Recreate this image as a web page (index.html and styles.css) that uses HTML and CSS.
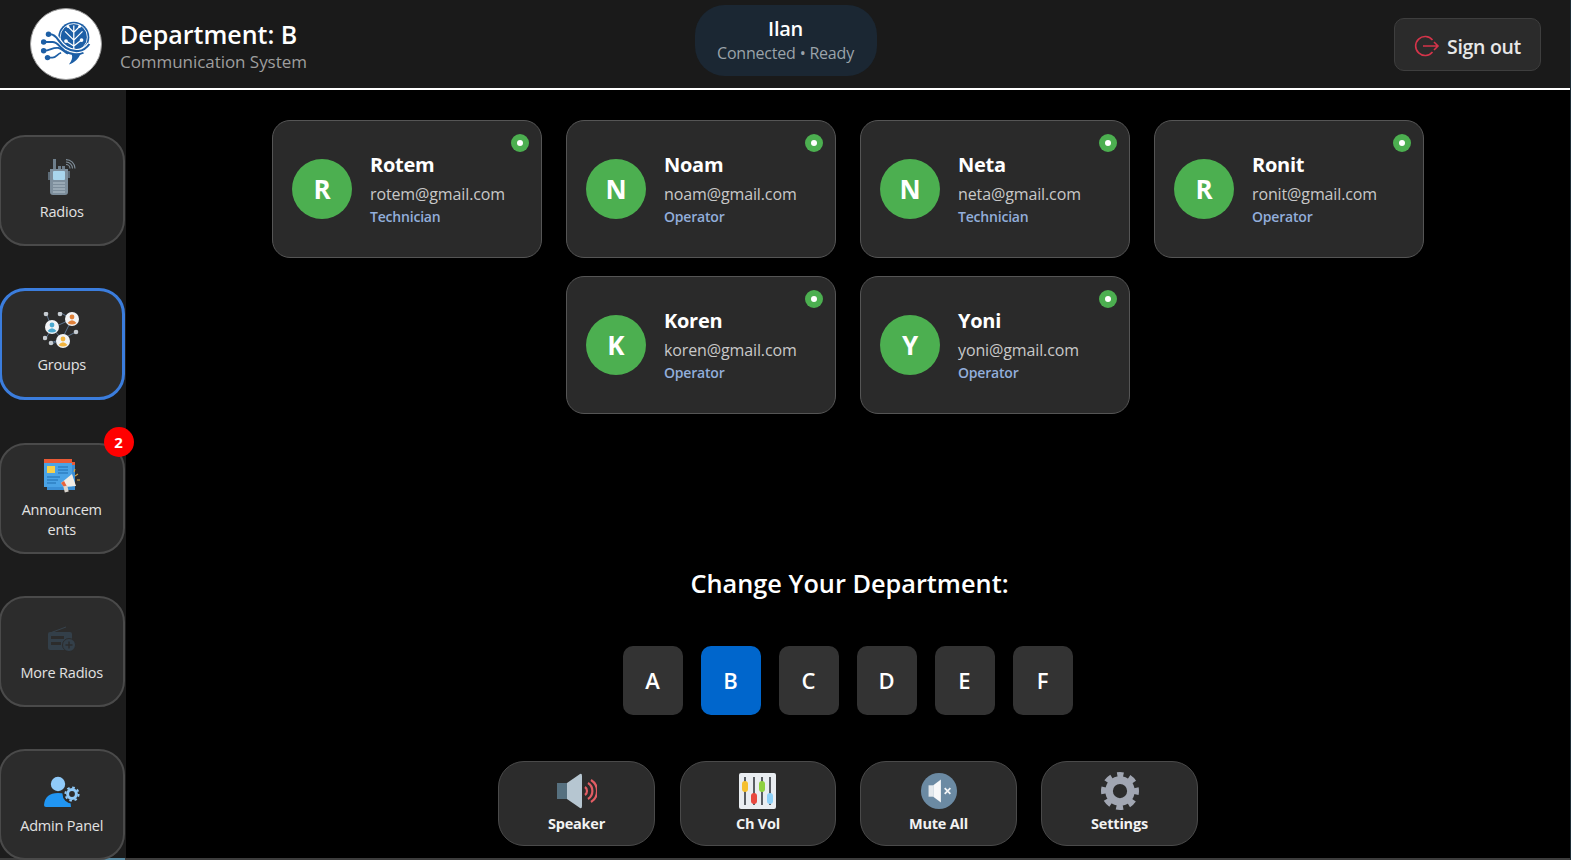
FILE: index.html
```html
<!DOCTYPE html>
<html lang="en">
<head>
<meta charset="utf-8">
<title>Department: B</title>
<link rel="stylesheet" href="styles.css">
</head>
<body>
<div class="app">
  <header class="topbar">
    <div class="brand">
      <div class="logo">
        <svg viewBox="0 0 72 72" width="70" height="70">
          <circle cx="44" cy="29" r="16" fill="#1d5fa6"/>
          <circle cx="44" cy="29" r="14" fill="none" stroke="#fff" stroke-width=".9"/>
          <path d="M44 43 V17 M44 32 L35 23 M44 32 L53 23 M44 38 L36 33 M44 38 L52 32 M38 18 L44 24 M50 18 L44 24" stroke="#fff" stroke-width="1.3" fill="none"/>
          <circle cx="36" cy="33" r="1.9" fill="#fff"/><circle cx="52" cy="32" r="1.9" fill="#fff"/><circle cx="38" cy="18" r="1.5" fill="#fff"/><circle cx="50" cy="18" r="1.5" fill="#fff"/>
          <path d="M18 26 H20 C27 26 28 35 36 40 C44 45 54 45 60 36" stroke="#fff" stroke-width="4.6" fill="none"/>
          <path d="M18 26 H20 C27 26 28 35 36 40 C44 45 54 45 60 36" stroke="#1d5fa6" stroke-width="2.2" fill="none"/>
          <path d="M13 34 H22 C29 34 30 42 38 45 C44 47 50 47 54 45" stroke="#1d5fa6" stroke-width="2" fill="none"/>
          <path d="M13 43 C20 43 22 39 28 40 C32 41 34 44 38 46" stroke="#1d5fa6" stroke-width="1.8" fill="none"/>
          <path d="M17 50 H22 C26 50 27 46 31 45" stroke="#1d5fa6" stroke-width="1.8" fill="none"/>
          <circle cx="18" cy="26" r="2.8" fill="#1d5fa6"/><circle cx="13" cy="34" r="2.8" fill="#1d5fa6"/><circle cx="13" cy="43" r="2.8" fill="#1d5fa6"/><circle cx="17" cy="50" r="2.8" fill="#1d5fa6"/>
          <path d="M42 47 L51 46 C49 51 45 55 39 57 C42 53 43 50 42 47Z" fill="#1d5fa6"/>
        </svg>
      </div>
      <div class="brand-text">
        <div class="brand-title">Department: B</div>
        <div class="brand-sub">Communication System</div>
      </div>
    </div>
    <div class="user-pill">
      <div class="user-name">Ilan</div>
      <div class="user-status">Connected • Ready</div>
    </div>
    <div class="top-actions">
      <button class="signout">
        <svg viewBox="0 0 26 24" width="26" height="24"><path d="M18.5 6 A9.5 9.5 0 1 0 18.5 18" fill="none" stroke="#d5344a" stroke-width="1.6"/><path d="M9 12 H24 M20 8 L24 12 L20 16" fill="none" stroke="#d5344a" stroke-width="1.6"/></svg>
        <span>Sign out</span>
      </button>
    </div>
  </header>
  <div class="body">
    <nav class="sidebar">
      <button class="nav-btn">
        <span class="icon-box">
        <svg viewBox="0 0 30 38" width="30" height="38">
          <rect x="6" y="0" width="3" height="10" fill="#6f7f8c"/>
          <rect x="11" y="7" width="3" height="3" fill="#6f7f8c"/><rect x="15" y="7" width="3" height="3" fill="#6f7f8c"/>
          <rect x="1" y="13" width="2" height="8" fill="#5d6c78"/><rect x="21" y="12" width="2" height="7" fill="#5d6c78"/>
          <path d="M3 10 H21 V33 Q21 36 18 36 H6 Q3 36 3 33 Z" fill="#7d8e9c"/>
          <rect x="6" y="12" width="12" height="9" rx="1" fill="#a9d6ee"/>
          <path d="M6 24 H18 M6 27 H18 M6 30 H18 M6 33 H18" stroke="#a3b2bd" stroke-width="1.4"/>
          <path d="M19 5.5 A4 4 0 0 1 23 9.5 M19 3 A6.5 6.5 0 0 1 25.5 9.5 M19 .6 A9 9 0 0 1 28 9.5" fill="none" stroke="#7f8d98" stroke-width="1.1"/>
        </svg>
        </span>
        <span>Radios</span>
      </button>
      <button class="nav-btn active">
        <span class="icon-box">
        <svg viewBox="0 0 38 38" width="38" height="38">
          <path d="M9 16 L29 7 M9 16 L19 27 M29 7 L19 27 M3 1 L9 16 M18 1 L29 7 M19 27 L35 19 M19 27 L7 31 M3 26 L9 16 M19 27 L9 32" stroke="#5d7590" stroke-width="1"/>
          <circle cx="3" cy="2" r="2.3" fill="#c6ccd2"/><circle cx="17" cy="2" r="2.3" fill="#c6ccd2"/><circle cx="33" cy="20" r="2.3" fill="#c6ccd2"/><circle cx="2" cy="26" r="2.3" fill="#c6ccd2"/><circle cx="8" cy="31" r="2.3" fill="#c6ccd2"/>
          <circle cx="9" cy="15" r="7" fill="#f2f4f6"/><circle cx="9" cy="13" r="2.4" fill="#4aa8cf"/><path d="M4.5 19 Q9 13.5 13.5 19 Q9 22 4.5 19Z" fill="#4aa8cf"/>
          <circle cx="29" cy="7" r="7" fill="#f2f4f6"/><circle cx="29" cy="5" r="2.4" fill="#e0813a"/><path d="M24.5 11 Q29 5.5 33.5 11 Q29 14 24.5 11Z" fill="#e0813a"/>
          <circle cx="20" cy="29" r="7" fill="#f2f4f6"/><circle cx="20" cy="27" r="2.4" fill="#f3b53f"/><path d="M15.5 33 Q20 27.5 24.5 33 Q20 36 15.5 33Z" fill="#f3b53f"/>
        </svg>
        </span>
        <span>Groups</span>
      </button>
      <button class="nav-btn">
        <span class="badge">2</span>
        <span class="icon-box">
        <svg viewBox="0 0 36 34" width="36" height="34">
          <rect x="3" y="3" width="28" height="28" fill="#3a8fd6"/>
          <rect x="0" y="0" width="28" height="28" fill="#4aa3e6"/>
          <rect x="0" y="0" width="28" height="4" fill="#ea5a36"/><rect x="28" y="3" width="3" height="3" fill="#ea5a36"/>
          <rect x="3" y="7" width="8" height="7" fill="#f5d04c"/>
          <path d="M14 8 H24 M14 11 H24 M14 14 H24 M3 18 H16 M3 21 H14 M3 24 H12" stroke="#1f6fb0" stroke-width="1.2"/>
          <path d="M17 24 L28 15 L32 27 L20 28Z" fill="#f1ece5"/><path d="M17 24 L20 28 L23 27.6 L20 22Z" fill="#e8623a"/><rect x="20" y="27" width="4" height="6" fill="#d9d4cd" transform="rotate(-15 22 30)"/>
          <path d="M31 17 L34 15 M33 21 H36 M30 13 L31 10" stroke="#d9a441" stroke-width="1.1"/>
        </svg>
        </span>
        <span>Announcem<br>ents</span>
      </button>
      <button class="nav-btn">
        <span class="icon-box">
        <svg viewBox="0 0 28 26" width="28" height="26">
          <path d="M2 7 L18 1" stroke="#37434d" stroke-width="1"/>
          <rect x="0" y="6" width="24" height="18" rx="2" fill="#333f49"/>
          <rect x="3" y="10" width="13" height="3" fill="#2c2c2c"/><rect x="3" y="16" width="10" height="3" fill="#2c2c2c"/>
          <circle cx="21" cy="19" r="6.5" fill="#333f49" stroke="#2c2c2c"/><path d="M21 15.5 V22.5 M17.5 19 H24.5" stroke="#2c2c2c" stroke-width="1.4"/>
        </svg>
        </span>
        <span>More Radios</span>
      </button>
      <button class="nav-btn">
        <span class="icon-box">
        <svg viewBox="0 0 36 32" width="36" height="32">
          <circle cx="14" cy="8" r="7.2" fill="#90caf9"/>
          <path d="M0 29 Q1 17 14 17 Q22 17 26 22 L27 31 H2 Q0 31 0 29 Z" fill="#2196f3"/>
          <circle cx="28" cy="18" r="9.5" fill="#2c2c2c"/>
          <circle cx="28" cy="18" r="4.4" fill="none" stroke="#90caf9" stroke-width="3"/>
          <circle cx="28" cy="18" r="6.6" fill="none" stroke="#90caf9" stroke-width="2" stroke-dasharray="2.6 2.58"/>
        </svg>
        </span>
        <span>Admin Panel</span>
      </button>
    </nav>
    <main class="content">
      <section class="cards">
        <article class="card"><span class="dot"></span><div class="avatar">R</div><div class="info"><div class="name">Rotem</div><div class="email">rotem@gmail.com</div><div class="role">Technician</div></div></article>
        <article class="card"><span class="dot"></span><div class="avatar">N</div><div class="info"><div class="name">Noam</div><div class="email">noam@gmail.com</div><div class="role">Operator</div></div></article>
        <article class="card"><span class="dot"></span><div class="avatar">N</div><div class="info"><div class="name">Neta</div><div class="email">neta@gmail.com</div><div class="role">Technician</div></div></article>
        <article class="card"><span class="dot"></span><div class="avatar">R</div><div class="info"><div class="name">Ronit</div><div class="email">ronit@gmail.com</div><div class="role">Operator</div></div></article>
        <article class="card"><span class="dot"></span><div class="avatar">K</div><div class="info"><div class="name">Koren</div><div class="email">koren@gmail.com</div><div class="role">Operator</div></div></article>
        <article class="card"><span class="dot"></span><div class="avatar">Y</div><div class="info"><div class="name">Yoni</div><div class="email">yoni@gmail.com</div><div class="role">Operator</div></div></article>
      </section>
      <h2 class="dept-title">Change Your Department:</h2>
      <div class="dept-row">
        <button class="dept">A</button>
        <button class="dept current">B</button>
        <button class="dept">C</button>
        <button class="dept">D</button>
        <button class="dept">E</button>
        <button class="dept">F</button>
      </div>
      <div class="controls">
        <button class="ctrl">
          <span class="icon-box">
          <svg viewBox="0 0 40 38" width="40" height="38">
            <path d="M0 11 H10 V27 H0Z" fill="#56707f"/>
            <path d="M10 11 L23 2 Q25 1 25 4 V34 Q25 37 23 36 L10 27Z" fill="#b6c6d1"/>
            <path d="M28 15 A5 5 0 0 1 28 23 M31 11 A9.5 9.5 0 0 1 31 27 M34 8 A13 13 0 0 1 34 30" fill="none" stroke="#e35d64" stroke-width="2.2"/>
          </svg>
          </span>
          <span>Speaker</span>
        </button>
        <button class="ctrl ctrl-narrow">
          <span class="icon-box">
          <svg viewBox="0 0 38 36" width="38" height="36">
            <rect x="0" y="0" width="37" height="36" rx="2" fill="#e9edf1"/>
            <path d="M6 4 V32 M15 4 V32 M23 4 V32 M31 4 V32" stroke="#2a2f36" stroke-width="1.5"/>
            <rect x="3" y="8" width="6" height="11" rx="3" fill="#f5c02e"/>
            <rect x="12" y="20" width="6" height="11" rx="3" fill="#e8483f"/>
            <rect x="20" y="8" width="6" height="11" rx="3" fill="#8ed13f"/>
            <rect x="28" y="20" width="6" height="11" rx="3" fill="#8cd0f8"/>
          </svg>
          </span>
          <span>Ch Vol</span>
        </button>
        <button class="ctrl">
          <span class="icon-box">
          <svg viewBox="0 0 40 38" width="38" height="38">
            <circle cx="20" cy="19" r="19" fill="#6b8aa3"/>
            <path d="M9 13 H14 V25 H9Z" fill="#e4e9ed"/><path d="M14 13 L22 7 V31 L14 25Z" fill="#f7f8f9"/>
            <path d="M26 16 L32 22 M32 16 L26 22" stroke="#f4f6f8" stroke-width="1.8"/>
          </svg>
          </span>
          <span>Mute All</span>
        </button>
        <button class="ctrl">
          <span class="icon-box">
          <svg viewBox="0 0 40 40" width="40" height="38">
            <circle cx="20" cy="20" r="11.5" fill="none" stroke="#a1a6b2" stroke-width="8"/>
            <circle cx="20" cy="20" r="17" fill="none" stroke="#a1a6b2" stroke-width="6" stroke-dasharray="7.2 6.15" stroke-dashoffset="3.6" transform="rotate(-90 20 20)"/>
          </svg>
          </span>
          <span>Settings</span>
        </button>
      </div>
    </main>
  </div>
  <div class="taskstrip"><span class="strip-blue"></span></div>
</div>
</body>
</html>
```

FILE: styles.css
```css
* { box-sizing: border-box; }
html, body { margin: 0; padding: 0; height: 100%; background: #000; overflow: hidden; }
body, button { font-family: "Open Sans", "Noto Sans", "Liberation Sans", sans-serif; }
.app { width: 1571px; height: 860px; display: flex; flex-direction: column; overflow: hidden; border-right: 1px solid #1d2c35; }

.topbar { height: 90px; flex: none; display: grid; grid-template-columns: 1fr auto 1fr; align-items: center; padding: 0 29px 0 30px; background: #1a1a1a; border-bottom: 2px solid #fff; }
.brand { display: flex; align-items: center; gap: 18px; }
.logo { width: 72px; height: 72px; border-radius: 50%; background: #fff; border: 1px solid #9a9a9a; display: flex; align-items: center; justify-content: center; }
.brand-text { display: flex; flex-direction: column; margin-top: 3px; }
.brand-title { font-size: 25px; line-height: 31px; font-weight: 600; color: #fff; }
.brand-sub { font-size: 17px; line-height: 23px; color: #9e9e9e; letter-spacing: -.05px; }
.user-pill { width: 182px; height: 71px; margin-bottom: 7px; border-radius: 30px; background: #1b2733; display: flex; flex-direction: column; align-items: center; justify-content: center; padding-bottom: 2px; }
.user-name { font-size: 20px; line-height: 27px; font-weight: 600; color: #fff; letter-spacing: -.3px; }
.user-status { font-size: 16px; line-height: 22px; color: #9aa3aa; letter-spacing: -.2px; }
.top-actions { display: flex; justify-content: flex-end; }
.signout { width: 147px; height: 53px; display: flex; align-items: center; justify-content: center; gap: 7px; background: #2b2b2b; border: 1px solid #3e3e3e; border-radius: 10px; color: #e8e8e8; font-size: 19.5px; font-weight: 600; padding: 4px 0 0; letter-spacing: -.3px; }

.body { flex: 1; min-height: 0; display: flex; }
.sidebar { width: 126px; flex: none; background: #1c1c1c; padding: 45px 0 0 0; display: flex; flex-direction: column; gap: 42px; }
.nav-btn { position: relative; width: 125.5px; height: 111px; margin-left: -1px; flex: none; display: flex; flex-direction: column; align-items: center; justify-content: center; gap: 5px; background: #2c2c2c; border: 2px solid #4a4a4a; border-radius: 26px; color: #e2e2e2; font-size: 14.5px; line-height: 20px; padding: 0 0 1px; letter-spacing: -.2px; }
.nav-btn.active { border: 3px solid #3b7ddd; height: 112px; margin-bottom: 1px; }
.icon-box { height: 38px; flex: none; display: flex; align-items: center; justify-content: center; }
.badge { position: absolute; top: -18px; right: -11px; width: 30px; height: 30px; border-radius: 50%; background: #f00; color: #fff; font-size: 15px; line-height: 30px; font-weight: 700; text-align: center; }

.content { flex: 1; min-width: 0; display: flex; flex-direction: column; align-items: center; padding-top: 30px; }
.cards { width: 1152px; display: flex; flex-wrap: wrap; justify-content: center; gap: 18.5px 24px; }
.card { position: relative; width: 270px; height: 137.5px; display: flex; align-items: center; gap: 18px; padding: 0 19px; background: #2a2a2a; border: 1px solid #555; border-radius: 18px; }
.dot { position: absolute; top: 13px; right: 12px; width: 18px; height: 18px; border-radius: 50%; background: #4caf50; display: flex; align-items: center; justify-content: center; }
.dot::after { content: ""; width: 6px; height: 6px; border-radius: 50%; background: #fff; }
.avatar { width: 60px; height: 60px; flex: none; border-radius: 50%; background: #4caf50; color: #fff; font-size: 26px; font-weight: 700; display: flex; align-items: center; justify-content: center; }
.info { display: flex; flex-direction: column; margin-top: 1px; padding-top: 0; transform: none; }
.name { font-size: 20px; line-height: 30px; font-weight: 700; color: #fff; letter-spacing: -.28px; margin-top: -2px; }
.email { font-size: 16px; line-height: 28px; color: #c8c8c8; letter-spacing: -.12px; }
.role { font-size: 14px; line-height: 18px; font-weight: 600; color: #92aedb; letter-spacing: -.2px; }

.dept-title { margin: 151px 0 0; padding-left: 3px; font-size: 25.3px; line-height: 36px; font-weight: 600; color: #fff; }
.dept-row { margin-top: 45px; display: flex; gap: 18px; }
.dept { width: 60px; height: 69px; padding: 0 1px 0 0; border: 0; border-radius: 10px; background: #333; color: #fff; font-size: 22px; font-weight: 600; }
.dept.current { background: #0066cc; }
.controls { margin-top: 46px; display: flex; gap: 24px; }
.ctrl { width: 157px; height: 85px; padding: 0; display: flex; flex-direction: column; align-items: center; justify-content: center; gap: 4px; background: #2c2c2c; border: 1px solid #4a4a4a; border-radius: 26px; color: #f2f2f2; font-size: 14.5px; line-height: 20px; font-weight: 700; letter-spacing: -.2px; }
.ctrl-narrow { width: 156px; margin-left: 1px; }

.taskstrip { height: 2px; flex: none; background: #3d3d3d; display: flex; padding-left: 25px; }
.strip-blue { width: 100px; height: 2px; background: #5a8ba3; }
```
